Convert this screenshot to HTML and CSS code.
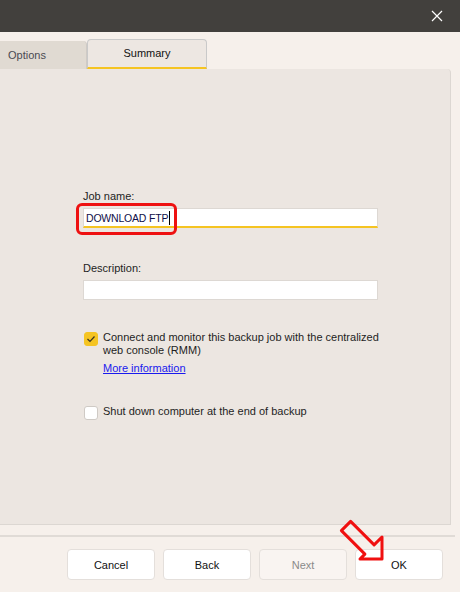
FILE: index.html
```html
<!DOCTYPE html>
<html lang="en">
  <head>
    <meta charset="UTF-8" />
    <title>Job Summary</title>
    <link rel="stylesheet" href="styles.css">
  </head>
  <body>
    <div class="titlebar">
      <svg class="close-icon" width="12" height="12" viewBox="0 0 12 12">
        <path d="M1 1 L11 11 M11 1 L1 11" stroke="#ffffff" stroke-width="1.2" />
      </svg>
    </div>

    <div class="tabs">
      <div class="tab tab-options">Options</div>
      <div class="tab tab-active">Summary</div>
    </div>

    <div class="panel">
      <div class="form">
        <label class="field-label">Job name:</label>
        <div class="input input-active">
          <span class="job-text">DOWNLOAD FTP</span><span class="caret"></span>
          <div class="highlight"></div>
        </div>

        <label class="field-label desc-label">Description:</label>
        <div class="input"></div>

        <div class="check-row rmm-row">
          <span class="checkbox checked">
            <svg width="10" height="8" viewBox="0 0 10 8">
              <path d="M1.5 4 L4 6.5 L8.5 1.5" stroke="#3a3320" stroke-width="1.2" fill="none" />
            </svg>
          </span>
          <div class="check-text">
            <div>Connect and monitor this backup job with the centralized<br>web console (RMM)</div>
            <a class="more-link" href="#">More information</a>
          </div>
        </div>

        <div class="check-row shutdown-row">
          <span class="checkbox"></span>
          <div class="check-text">Shut down computer at the end of backup</div>
        </div>
      </div>
    </div>

    <div class="separator"></div>

    <div class="buttons">
      <button class="btn">Cancel</button>
      <button class="btn">Back</button>
      <button class="btn btn-disabled">Next</button>
      <button class="btn">OK</button>
    </div>

    <!-- red arrow pointing at OK -->
    <svg class="arrow" width="60" height="60" viewBox="0 0 60 60">
      <path d="M20.6 11.4 L44.1 34.9 L52 27 L52 49 L30 49 L34.9 44.1 L11.4 20.6 Z"
        fill="none" stroke="#f01010" stroke-width="3" stroke-linejoin="round" />
    </svg>
  </body>
</html>
```

FILE: styles.css
```css
body {
  margin: 0;
  width: 460px;
  height: 592px;
  overflow: hidden;
  background-color: #f6f0eb;
  font-family: "Liberation Sans", Arial, sans-serif;
  font-size: 11px;
  color: #1e1e1e;
  position: relative;
}

.titlebar {
  height: 32px;
  background-color: #42403d;
  display: flex;
  align-items: center;
  justify-content: flex-end;
  padding-right: 17px;
}

.tabs {
  height: 37px;
  display: flex;
  align-items: flex-end;
}
.tab {
  box-sizing: border-box;
  display: flex;
  align-items: center;
  color: #333;
}
.tab-options {
  width: 87px;
  height: 28px;
  padding-left: 8px;
  background-color: #e0dad2;
  border-top-right-radius: 4px;
  border-right: 1px solid #cfcac5;
  color: #4a4a52;
}
.tab-active {
  width: 120px;
  height: 30px;
  justify-content: center;
  background-color: #ede7e2;
  border: 1px solid #c9c9c9;
  border-bottom: 2px solid #f5c422;
  border-radius: 4px 4px 0 0;
  color: #111;
  padding-bottom: 2px;
}

.panel {
  width: 451px;
  height: 456px;
  box-sizing: border-box;
  background-color: #ece6e1;
  border-right: 1px solid #dcd7d2;
  border-bottom: 1px solid #dcd7d2;
  border-top-right-radius: 4px;
  padding: 120px 0 0 83px;
}

.form {
  width: 295px;
}
.field-label {
  display: block;
  line-height: 14px;
  margin-bottom: 5px;
}
.desc-label {
  margin-top: 33px;
}
.input {
  position: relative;
  box-sizing: border-box;
  height: 20px;
  background-color: #fff;
  border: 1px solid #ddd8d3;
  padding: 2px 2px;
  line-height: 15px;
  color: #10104a;
}
.input-active {
  border-bottom: 2px solid #f5c422;
}
.job-text {
  font-size: 10.5px;
  letter-spacing: -0.2px;
}
.caret {
  display: inline-block;
  width: 1px;
  height: 14px;
  background-color: #000;
  vertical-align: -3px;
  margin-left: 1px;
}
.highlight {
  position: absolute;
  left: -8px;
  top: -6px;
  width: 95px;
  height: 26px;
  border: 3px solid #ee1111;
  border-radius: 6px;
}

.check-row {
  display: flex;
  align-items: flex-start;
  gap: 5px;
  width: 320px;
}
.rmm-row {
  margin-top: 31px;
}
.shutdown-row {
  margin-top: 30px;
}
.checkbox {
  box-sizing: border-box;
  width: 14px;
  height: 14px;
  margin-top: 1px;
  margin-left: 1px;
  flex-shrink: 0;
  border-radius: 3px;
  background-color: #fff;
  border: 1px solid #cfcac5;
  display: flex;
  align-items: center;
  justify-content: center;
}
.checked {
  background-color: #f5c422;
  border-color: #f5c422;
}
.check-text {
  line-height: 13px;
  white-space: nowrap;
}
.more-link {
  display: inline-block;
  margin-top: 5px;
  color: #1a1aee;
}

.separator {
  margin-top: 10px;
  width: 455px;
  height: 2px;
  background-color: #e0dbd6;
}

.buttons {
  display: flex;
  justify-content: flex-end;
  gap: 8px;
  padding: 12px 17px 0 0;
}
.btn {
  width: 88px;
  height: 31px;
  background-color: #fff;
  border: 1px solid #e4dfdb;
  border-radius: 4px;
  font-family: "Liberation Sans", Arial, sans-serif;
  font-size: 11px;
  color: #111;
}
.btn-disabled {
  background-color: #f9f4f1;
  color: #8a8a8a;
}

.arrow {
  position: absolute;
  left: 330px;
  top: 510px;
}
```
